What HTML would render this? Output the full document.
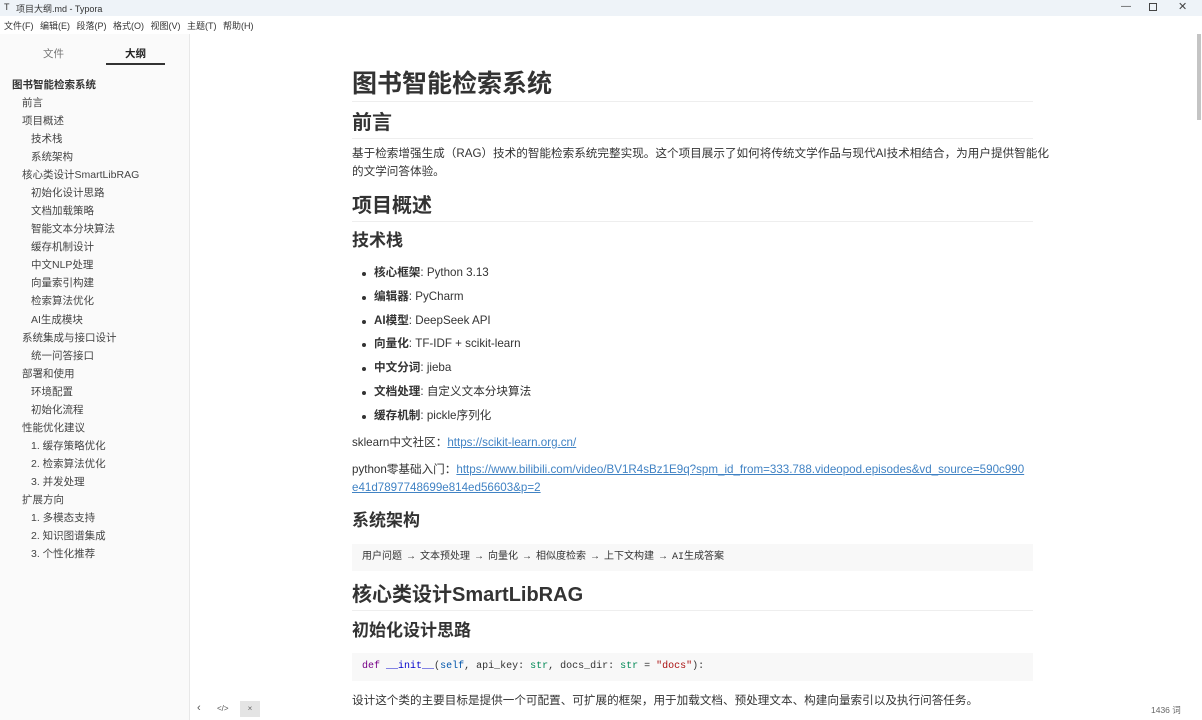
<!DOCTYPE html>
<html><head><meta charset="utf-8"><style>
*{margin:0;padding:0;box-sizing:border-box}
body{width:1202px;height:720px;overflow:hidden;background:#fff;font-family:"Liberation Sans","Noto Sans CJK SC",sans-serif;color:#333;position:relative}
.a{position:absolute;white-space:nowrap}
#tb{position:absolute;left:0;top:0;width:1202px;height:16px;background:#eef3f8}
#side{position:absolute;left:0;top:34px;width:190px;height:686px;background:#fafafa;border-right:1px solid #e8e8e8}
.s{position:absolute;font-size:10.5px;color:#444;line-height:14px;white-space:nowrap}
.h{position:absolute;font-weight:bold;color:#333;white-space:nowrap;left:352px}
.p{position:absolute;font-size:11.6px;color:#333;line-height:18px;white-space:nowrap;left:352px}
.li{position:absolute;left:362px;font-size:11.6px;line-height:16px;white-space:nowrap}
.li:before{content:"";position:absolute;left:0;top:7px;width:4px;height:4px;border-radius:50%;background:#333}
.li span{margin-left:12px}
a{color:#4183c4;text-decoration:underline}
.code{position:absolute;left:352px;width:681px;background:#f8f8f8;font-family:"Liberation Mono","Noto Sans CJK SC",monospace;font-size:10px;white-space:nowrap;padding-left:10px}
.bl{position:absolute;left:352px;width:681px;height:1px;background:#eee}
</style></head><body>
<div id="tb"></div>
<div class="a" style="left:4px;top:2px;font-size:9px;color:#333">T</div>
<div class="a" style="left:16px;top:2px;font-size:9px;color:#333">项目大纲.md - Typora</div>
<div class="a" style="left:1121px;top:1px;font-size:10px;color:#444">—</div>
<div class="a" style="left:1149px;top:3px;width:8px;height:8px;border:1px solid #444"></div>
<div class="a" style="left:1178px;top:0px;font-size:11px;color:#444">✕</div>
<div class="a" style="left:4px;top:19px;font-size:9px;color:#333;word-spacing:4px">文件(F) 编辑(E) 段落(P) 格式(O) 视图(V) 主题(T) 帮助(H)</div>
<div id="side"></div>
<div class="a" style="left:43px;top:46px;font-size:10.5px;color:#777">文件</div>
<div class="a" style="left:125px;top:46px;font-size:10.5px;color:#222;font-weight:bold">大纲</div>
<div class="a" style="left:106px;top:63px;width:59px;height:2px;background:#333"></div>
<div class="s" style="left:12px;top:78px;font-weight:bold;color:#333">图书智能检索系统</div>
<div class="s" style="left:22px;top:96px">前言</div>
<div class="s" style="left:22px;top:114px">项目概述</div>
<div class="s" style="left:31px;top:132px">技术栈</div>
<div class="s" style="left:31px;top:150px">系统架构</div>
<div class="s" style="left:22px;top:168px">核心类设计SmartLibRAG</div>
<div class="s" style="left:31px;top:186px">初始化设计思路</div>
<div class="s" style="left:31px;top:204px">文档加载策略</div>
<div class="s" style="left:31px;top:222px">智能文本分块算法</div>
<div class="s" style="left:31px;top:240px">缓存机制设计</div>
<div class="s" style="left:31px;top:258px">中文NLP处理</div>
<div class="s" style="left:31px;top:276px">向量索引构建</div>
<div class="s" style="left:31px;top:294px">检索算法优化</div>
<div class="s" style="left:31px;top:313px">AI生成模块</div>
<div class="s" style="left:22px;top:331px">系统集成与接口设计</div>
<div class="s" style="left:31px;top:349px">统一问答接口</div>
<div class="s" style="left:22px;top:367px">部署和使用</div>
<div class="s" style="left:31px;top:385px">环境配置</div>
<div class="s" style="left:31px;top:403px">初始化流程</div>
<div class="s" style="left:22px;top:421px">性能优化建议</div>
<div class="s" style="left:31px;top:439px">1. 缓存策略优化</div>
<div class="s" style="left:31px;top:457px">2. 检索算法优化</div>
<div class="s" style="left:31px;top:475px">3. 并发处理</div>
<div class="s" style="left:22px;top:493px">扩展方向</div>
<div class="s" style="left:31px;top:511px">1. 多模态支持</div>
<div class="s" style="left:31px;top:529px">2. 知识图谱集成</div>
<div class="s" style="left:31px;top:547px">3. 个性化推荐</div>
<div class="a" style="left:1197px;top:34px;width:4px;height:86px;background:#c4c4c4"></div>

<div class="h" style="top:67px;font-size:25px;line-height:34px">图书智能检索系统</div>
<div class="bl" style="top:101px"></div>
<div class="h" style="top:109px;font-size:20px;line-height:28px">前言</div>
<div class="bl" style="top:138px"></div>
<div class="p" style="top:145px">基于检索增强生成（RAG）技术的智能检索系统完整实现。这个项目展示了如何将传统文学作品与现代AI技术相结合，为用户提供智能化</div>
<div class="p" style="top:163px">的文学问答体验。</div>
<div class="h" style="top:192px;font-size:20px;line-height:28px">项目概述</div>
<div class="bl" style="top:221px"></div>
<div class="h" style="top:229px;font-size:17px;line-height:24px">技术栈</div>
<div class="li" style="top:265px"><span><b>核心框架</b>: Python 3.13</span></div>
<div class="li" style="top:289px"><span><b>编辑器</b>: PyCharm</span></div>
<div class="li" style="top:313px"><span><b>AI模型</b>: DeepSeek API</span></div>
<div class="li" style="top:336px"><span><b>向量化</b>: TF-IDF + scikit-learn</span></div>
<div class="li" style="top:360px"><span><b>中文分词</b>: jieba</span></div>
<div class="li" style="top:384px"><span><b>文档处理</b>: 自定义文本分块算法</span></div>
<div class="li" style="top:408px"><span><b>缓存机制</b>: pickle序列化</span></div>
<div class="p" style="top:434px">sklearn中文社区：<a>https://scikit-learn.org.cn/</a></div>
<div class="p" style="top:461px">python零基础入门：<a>https://www.bilibili.com/video/BV1R4sBz1E9q?spm_id_from=333.788.videopod.episodes&amp;vd_source=590c990</a></div>
<div class="p" style="top:479px"><a>e41d7897748699e814ed56603&amp;p=2</a></div>
<div class="h" style="top:509px;font-size:17px;line-height:24px">系统架构</div>
<div class="code" style="top:544px;height:27px;line-height:27px;color:#333">用户问题 → 文本预处理 → 向量化 → 相似度检索 → 上下文构建 → AI生成答案</div>
<div class="h" style="top:581px;font-size:20px;line-height:28px">核心类设计SmartLibRAG</div>
<div class="bl" style="top:610px"></div>
<div class="h" style="top:619px;font-size:17px;line-height:24px">初始化设计思路</div>
<div class="code" style="top:653px;height:28px;line-height:28px;color:#333"><span style="color:#708">def</span> <span style="color:#00c">__init__</span>(<span style="color:#05a">self</span>, api_key: <span style="color:#085">str</span>, docs_dir: <span style="color:#085">str</span> = <span style="color:#a11">"docs"</span>):</div>
<div class="p" style="top:692px">设计这个类的主要目标是提供一个可配置、可扩展的框架，用于加载文档、预处理文本、构建向量索引以及执行问答任务。</div>
<div class="a" style="left:197px;top:702px;font-size:11px;color:#555">‹</div>
<div class="a" style="left:217px;top:704px;font-size:8px;color:#555">&lt;/&gt;</div>
<div class="a" style="left:240px;top:701px;width:20px;height:16px;background:#e4e4e4;font-size:8px;color:#666;text-align:center;line-height:16px">×</div>
<div class="a" style="left:1151px;top:704px;font-size:8.5px;color:#666">1436 词</div>
</body></html>
